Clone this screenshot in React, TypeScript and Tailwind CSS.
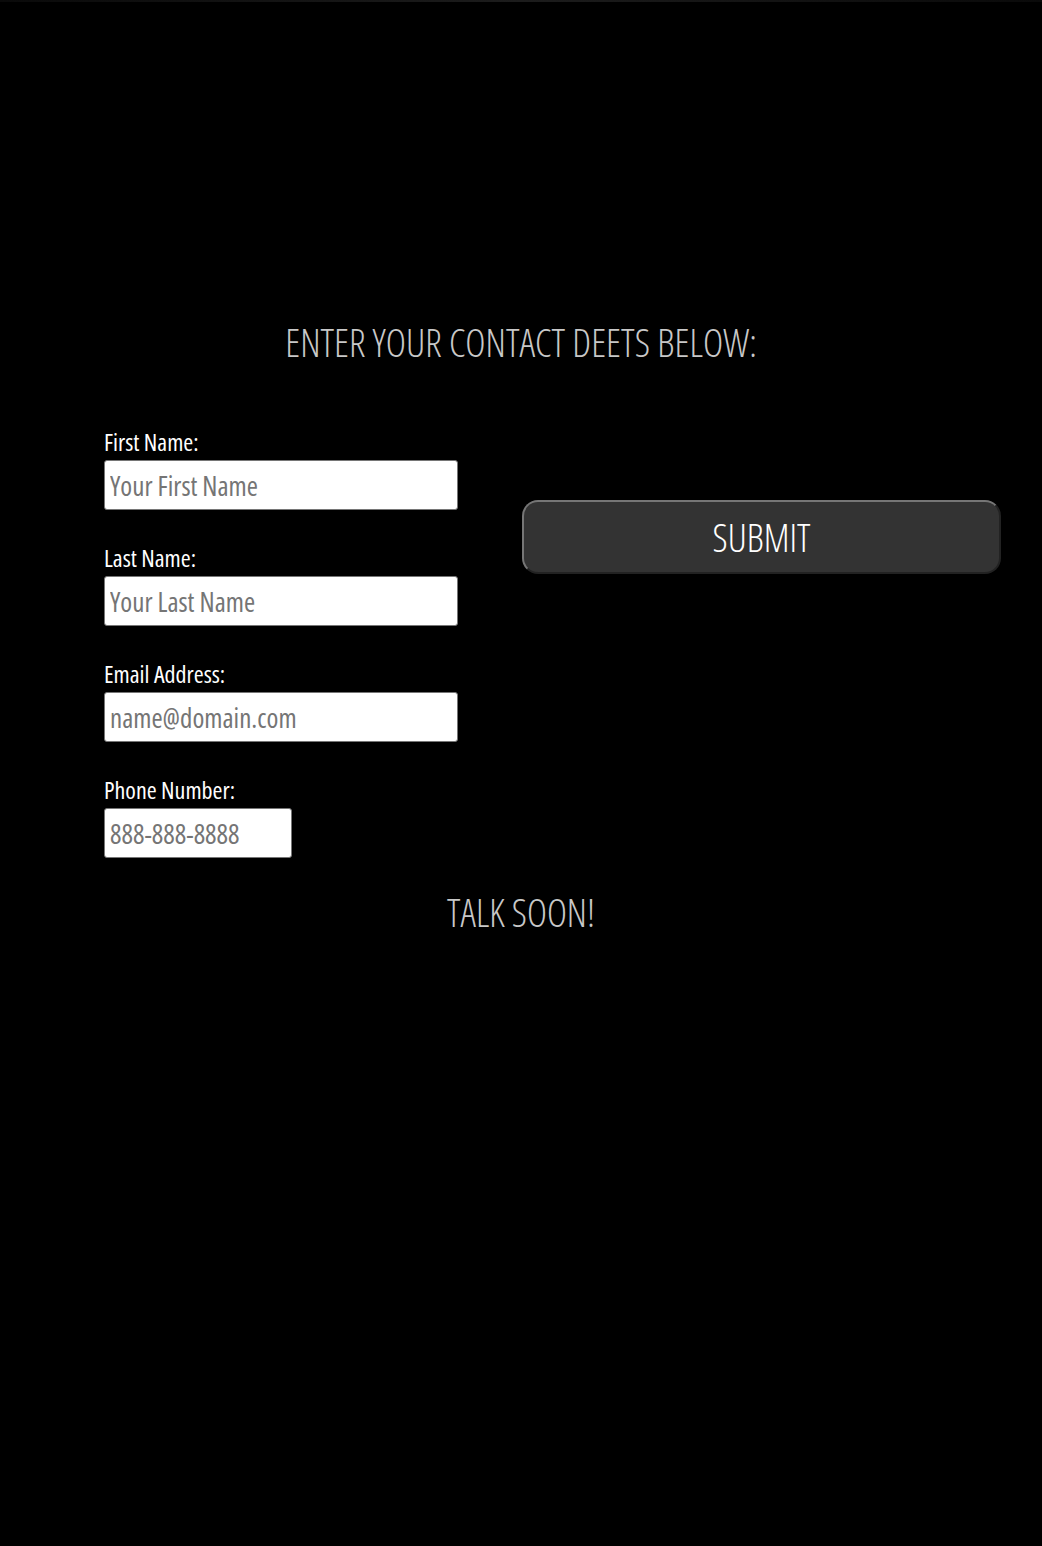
import React, {useState} from "react";

// condensed look of the original typeface
const font = "font-['Open_Sans',sans-serif] font-stretch-[75%]";

interface FieldProps {
    label: string
    placeholder: string
    width: string
    value: string
    onChange: (v: string) => void
}

const Field = ({label, placeholder, width, value, onChange}: FieldProps) => (
    <div className="flex flex-col">
        <label className="text-[24px] leading-[28px] text-white mb-[4px]">{label}</label>
        <input
            type="text"
            placeholder={placeholder}
            value={value}
            onChange={(e) => onChange(e.target.value)}
            className={`${width} h-[50px] bg-white rounded-[3px] border border-[#767676] px-[5px] text-[27px] text-[#333] placeholder:text-[#757575] outline-none ${font}`}
        />
    </div>
)

const App = () => {
    const [first, setFirst] = useState('');
    const [last, setLast] = useState('');
    const [email, setEmail] = useState('');
    const [phone, setPhone] = useState('');

    return (
        <div className={`min-h-[1546px] bg-black flex flex-col ${font}`}>
            <div className="h-[2px] bg-gradient-to-r from-[#0a0a0a] via-[#1c1c1c] to-[#0a0a0a]"></div>
            <h1 className="mt-[316px] text-center text-[38.5px] font-light leading-[48px] text-[#c8c8c8]">
                ENTER YOUR CONTACT DEETS BELOW:
            </h1>
            <form className="mt-[62px] flex flex-row pl-[104px]" onSubmit={(e) => e.preventDefault()}>
                <div className="flex flex-col gap-[34px] w-[354px]">
                    <Field label="First Name:" placeholder="Your First Name" width="w-[354px]" value={first} onChange={setFirst}/>
                    <Field label="Last Name:" placeholder="Your Last Name" width="w-[354px]" value={last} onChange={setLast}/>
                    <Field label="Email Address:" placeholder="name@domain.com" width="w-[354px]" value={email} onChange={setEmail}/>
                    <Field label="Phone Number:" placeholder="888-888-8888" width="w-[188px]" value={phone} onChange={setPhone}/>
                </div>
                <div className="ml-[64px] mt-[72px]">
                    <button
                        type="submit"
                        className="w-[479px] h-[74px] rounded-[16px] bg-[#333333] border-2 border-[#767676] border-r-[#222] border-b-[#222] text-white text-[38px] font-light leading-none"
                    >
                        SUBMIT
                    </button>
                </div>
            </form>
            <p className="mt-[30px] text-center text-[38px] font-light leading-[48px] text-[#c8c8c8]">TALK SOON!</p>
        </div>
    )
}

export default App
